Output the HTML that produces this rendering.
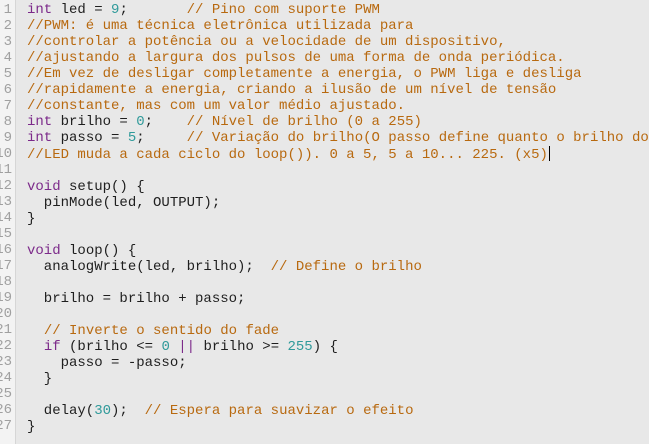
<!DOCTYPE html>
<html><head><meta charset="utf-8"><style>
html,body{margin:0;padding:0;width:649px;height:444px;overflow:hidden;background:#e8e8e8;}
.g{position:absolute;left:0;top:0;width:15px;height:444px;background:#f3f3f3;border-right:1px solid #d6d6d6;}
.ln{position:absolute;right:3px;top:2px;text-align:right;font:14px/16px "Liberation Mono",monospace;color:#a0a0a0;white-space:pre;}
.code{position:absolute;left:27px;top:2px;font:14px/16px "Liberation Mono",monospace;color:#1e1e1e;white-space:pre;}
.k{color:#7c2a8a}.n{color:#2f9a9a}.c{color:#b8690f}
.cur{display:inline-block;width:1px;height:15px;background:#000;vertical-align:-3px;margin-left:1px}
</style></head><body>
<div class="g"><div class="ln">1
2
3
4
5
6
7
8
9
10
11
12
13
14
15
16
17
18
19
20
21
22
23
24
25
26
27</div></div>
<div class="code"><span class="k">int</span> led = <span class="n">9</span>;       <span class="c">// Pino com suporte PWM</span>
<span class="c">//PWM: é uma técnica eletrônica utilizada para</span>
<span class="c">//controlar a potência ou a velocidade de um dispositivo,</span>
<span class="c">//ajustando a largura dos pulsos de uma forma de onda periódica.</span>
<span class="c">//Em vez de desligar completamente a energia, o PWM liga e desliga</span>
<span class="c">//rapidamente a energia, criando a ilusão de um nível de tensão</span>
<span class="c">//constante, mas com um valor médio ajustado.</span>
<span class="k">int</span> brilho = <span class="n">0</span>;    <span class="c">// Nível de brilho (0 a 255)</span>
<span class="k">int</span> passo = <span class="n">5</span>;     <span class="c">// Variação do brilho(O passo define quanto o brilho do</span>
<span class="c">//LED muda a cada ciclo do loop()). 0 a 5, 5 a 10... 225. (x5)</span><span class="cur"></span>

<span class="k">void</span> setup() {
  pinMode(led, OUTPUT);
}

<span class="k">void</span> loop() {
  analogWrite(led, brilho);  <span class="c">// Define o brilho</span>

  brilho = brilho + passo;

  <span class="c">// Inverte o sentido do fade</span>
  <span class="k">if</span> (brilho &lt;= <span class="n">0</span> <span class="k">||</span> brilho &gt;= <span class="n">255</span>) {
    passo = -passo;
  }

  delay(<span class="n">30</span>);  <span class="c">// Espera para suavizar o efeito</span>
}</div>
</body></html>
